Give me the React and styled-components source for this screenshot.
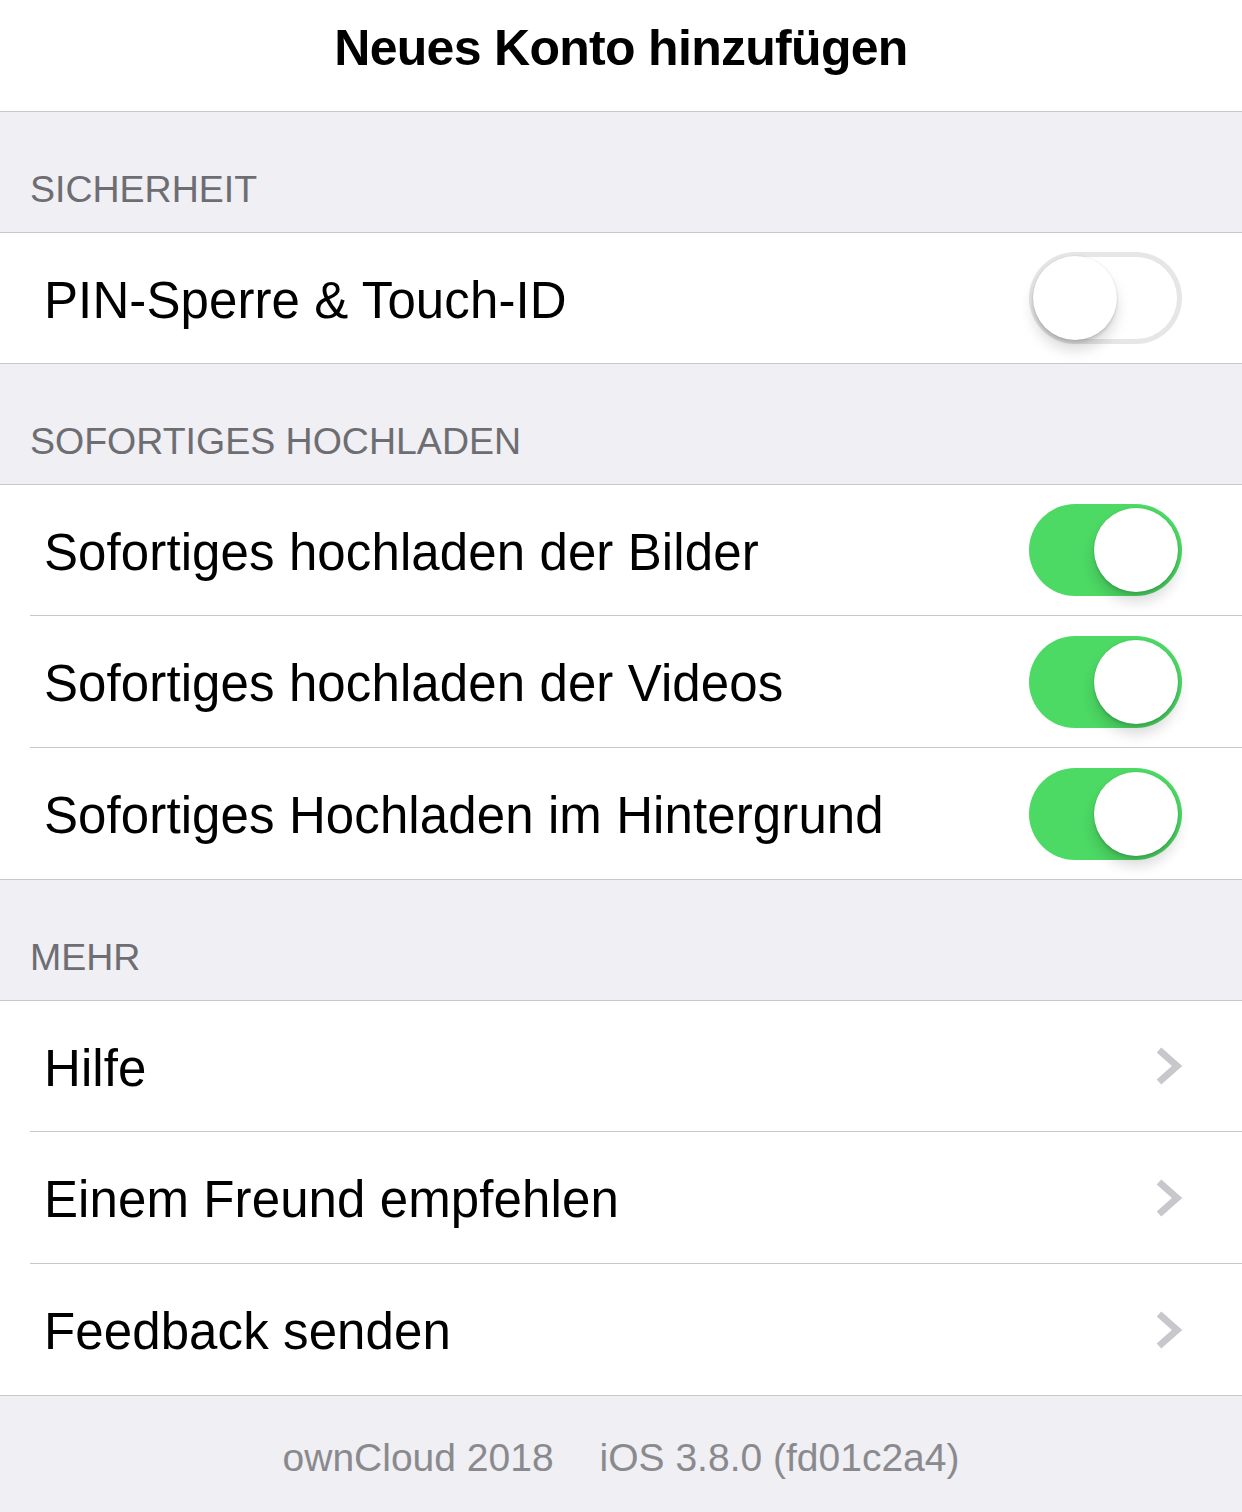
import React from 'react';
import styled, { createGlobalStyle } from 'styled-components';

const GlobalStyle = createGlobalStyle`
  html, body {
    margin: 0;
    padding: 0;
    background: #efeff4;
  }
  body {
    font-family: "Liberation Sans", Arial, sans-serif;
    -webkit-font-smoothing: antialiased;
  }
`;

const Page = styled.div`
  width: 1242px;
  height: 1512px;
  overflow: hidden;
  background: #efeff4;
  display: flex;
  flex-direction: column;
`;

const NavBar = styled.header`
  height: 112px;
  box-sizing: border-box;
  padding-top: 23px;
  background: #fff;
  border-bottom: 1px solid #c8c7cc;
  text-align: center;
`;

const Title = styled.h1`
  margin: 0;
  font-size: 50px;
  line-height: 50px;
  font-weight: 700;
  letter-spacing: -0.7px;
  color: #000;
`;

const SectionHeader = styled.div`
  height: 120px;
  box-sizing: border-box;
  display: flex;
  align-items: flex-end;
  padding: 0 30px 24px;
  font-size: 37.5px;
  line-height: 37.5px;
  color: #6d6d72;
  text-transform: uppercase;
`;

const Group = styled.div`
  background: #fff;
  border-top: 1px solid #c8c7cc;
  border-bottom: 1px solid #c8c7cc;
`;

const Row = styled.div`
  padding-left: 30px;
`;

// iOS rows are 44pt: the first one in a group is a pixel shorter
const RowInner = styled.div`
  height: ${(p) => (p.$first ? '130px' : '131px')};
  display: flex;
  align-items: center;
  justify-content: space-between;
  padding: 0 60px 0 14px;
  border-bottom: ${(p) => (p.$last ? 'none' : '1px solid #c8c7cc')};
`;

const Label = styled.span`
  font-size: 51px;
  line-height: 59px;
  padding-top: 4px;
  letter-spacing: 0.1px;
  color: #000;
  white-space: nowrap;
`;

const Track = styled.span`
  position: relative;
  display: block;
  width: 153px;
  height: 92px;
  border-radius: 46px;
  background: ${(p) => (p.$on ? '#4cd964' : '#fff')};
  box-shadow: ${(p) => (p.$on ? 'none' : 'inset 0 0 0 5px #e6e6e6')};
  flex-shrink: 0;
`;

const Knob = styled.span`
  position: absolute;
  top: 4px;
  left: ${(p) => (p.$on ? '65px' : '4px')};
  width: 84px;
  height: 84px;
  border-radius: 50%;
  background: #fff;
  box-shadow: 0 10px 14px rgba(0, 0, 0, 0.15), 0 3px 3px rgba(0, 0, 0, 0.1),
    0 0 0 1px rgba(0, 0, 0, 0.04);
`;

const Footer = styled.footer`
  flex: 1;
  display: flex;
  justify-content: center;
  gap: 46px;
  padding-top: 39px;
  font-size: 39px;
  line-height: 46px;
  color: #8a8a8e;
`;

const Switch = ({ on }) => (
  <Track $on={on}>
    <Knob $on={on} />
  </Track>
);

const Chevron = () => (
  <svg width="26" height="40" viewBox="0 0 26 40" aria-hidden="true">
    <polyline
      points="3,4 21,20 3,36"
      fill="none"
      stroke="#c7c7cc"
      strokeWidth="7"
      strokeLinejoin="miter"
    />
  </svg>
);

const sections = [
  {
    title: 'Sicherheit',
    rows: [{ label: 'PIN-Sperre & Touch-ID', toggle: false }],
  },
  {
    title: 'Sofortiges Hochladen',
    rows: [
      { label: 'Sofortiges hochladen der Bilder', toggle: true },
      { label: 'Sofortiges hochladen der Videos', toggle: true },
      { label: 'Sofortiges Hochladen im Hintergrund', toggle: true },
    ],
  },
  {
    title: 'Mehr',
    rows: [
      { label: 'Hilfe' },
      { label: 'Einem Freund empfehlen' },
      { label: 'Feedback senden' },
    ],
  },
];

const App = () => (
  <>
    <GlobalStyle />
    <Page>
      <NavBar>
        <Title>Neues Konto hinzufügen</Title>
      </NavBar>
      {sections.map((section) => (
        <React.Fragment key={section.title}>
          <SectionHeader>{section.title}</SectionHeader>
          <Group>
            {section.rows.map((row, i) => (
              <Row key={row.label}>
                <RowInner $first={i === 0} $last={i === section.rows.length - 1}>
                  <Label>{row.label}</Label>
                  {typeof row.toggle === 'boolean' ? <Switch on={row.toggle} /> : <Chevron />}
                </RowInner>
              </Row>
            ))}
          </Group>
        </React.Fragment>
      ))}
      <Footer>
        <span>ownCloud 2018</span>
        <span>iOS 3.8.0 (fd01c2a4)</span>
      </Footer>
    </Page>
  </>
);

export default App;
